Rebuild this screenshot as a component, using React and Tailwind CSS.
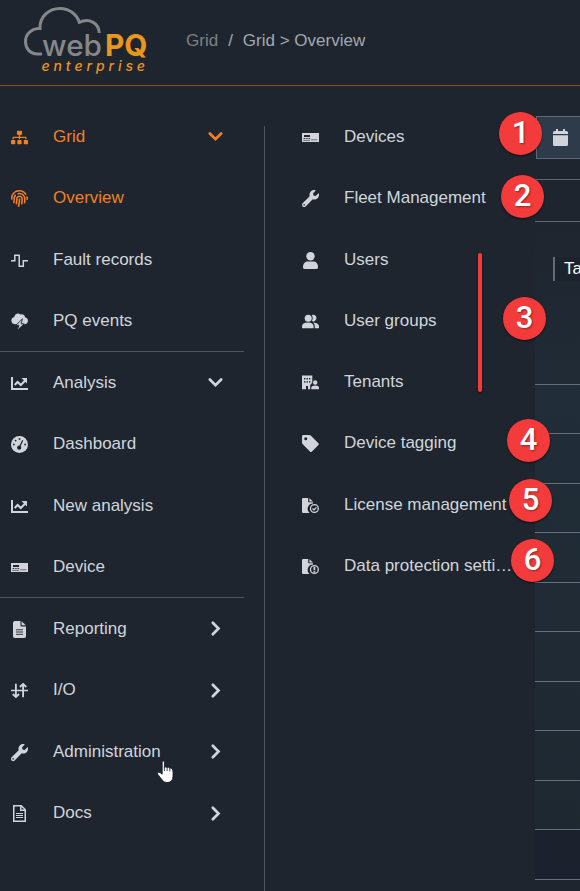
import React from "react";
import { FaSitemap, FaFingerprint, FaWrench } from "react-icons/fa";

const PulseIcon = () => (
  <svg width="17" height="17" viewBox="0 0 17 17" fill="none" stroke="currentColor" strokeWidth="1.5">
    <path d="M0 8.7H3.8V3.2H8.2V14.2H12.3V8.7H17" />
  </svg>
);

const StormIcon = () => (
  <svg width="17" height="17" viewBox="0 0 17 17">
    <path
      fill="currentColor"
      d="M3.300 4A3.700 3.700 0 0 1 9.600 1.600A3 3 0 0 1 14 4.300A3.600 3.600 0 0 1 17 7.800C17 10 15.500 11.300 13.300 11.300H3.800A3.700 3.700 0 0 1 3.300 4Z"
    />
    <path fill="currentColor" stroke="#1e252f" strokeWidth="0.9" d="M11.500 5.800L4.800 12.300H8L6 17.500L13.200 10.800H10Z" />
  </svg>
);

const ChartIcon = () => (
  <svg width="17" height="17" viewBox="0 0 17 17" fill="none" stroke="currentColor">
    <path d="M1 2V14H17" strokeWidth="2" />
    <path d="M3.700 10L6.600 7L9.800 10L14.200 5.500" strokeWidth="2.1" />
    <path d="M10.500 3H16V8.500Z" fill="currentColor" stroke="none" />
  </svg>
);

const GaugeIcon = () => (
  <svg width="17" height="17" viewBox="0 0 17 17">
    <circle cx="8.5" cy="8.5" r="8.5" fill="currentColor" />
    <g fill="#1e252f">
      <circle cx="8.5" cy="3" r="0.9" />
      <circle cx="4.6" cy="4.6" r="0.9" />
      <circle cx="2.9" cy="8.5" r="0.9" />
      <circle cx="14.1" cy="8.5" r="0.9" />
      <circle cx="8.2" cy="11.7" r="2.1" />
    </g>
    <path d="M8.3 11.5L11.7 4.3" stroke="#1e252f" strokeWidth="1.2" />
  </svg>
);

const DeviceIcon = () => (
  <svg width="17" height="17" viewBox="0 0 17 17">
    <rect y="4" width="17" height="9" fill="currentColor" />
    <g fill="#1e252f">
      <rect x="2" y="6" width="6" height="2" />
      <rect x="1.6" y="9" width="1.3" height="1" />
      <rect x="3.7" y="9" width="1" height="1" />
      <rect x="5.4" y="9" width="1" height="1" />
      <rect x="7.1" y="9" width="1" height="1" />
      <rect x="1.3" y="10.9" width="6.7" height="0.6" />
      <rect x="9" y="10.6" width="6.3" height="0.6" />
    </g>
  </svg>
);

const ReportIcon = () => (
  <svg width="17" height="17" viewBox="0 0 17 17" fill="currentColor">
    <path d="M4 0H9.5V4.2Q9.5 5.4 10.7 5.4H15V15.3Q15 17 13.3 17H3.7Q2 17 2 15.3V2Q2 0 4 0ZM10.6 0.2L14.8 4.3H10.6Z" />
    <path d="M5 8.8H12M5 11H12M5 13.3H12" stroke="#1e252f" strokeWidth="0.9" />
  </svg>
);

const DocsIcon = () => (
  <svg width="17" height="17" viewBox="0 0 17 17" fill="none" stroke="currentColor" strokeWidth="1.5">
    <path d="M2.750 0.750H10.300L14.250 4.700V16.250H2.750Z" />
    <path d="M9.8 0.9V5.2H14.2" />
    <path d="M5 8.500H12M5 10.500H12M5 12.500H12" strokeWidth="1" />
  </svg>
);

const IoIcon = () => (
  <svg width="17" height="17" viewBox="0 0 17 17" fill="none" stroke="currentColor" strokeWidth="1.8">
    <path d="M0 8.5H17" strokeWidth="1.5" />
    <path d="M4.900 1.700V15M1.700 12L4.900 15L8.100 12" />
    <path d="M12.100 15.300V2M8.900 5L12.100 2L15.300 5" />
  </svg>
);

const PersonIcon = () => (
  <svg width="17" height="17" viewBox="0 0 17 17" fill="currentColor">
    <circle cx="8.5" cy="4.300" r="4.200" />
    <path d="M1 15.300C1 11.500 3 9.600 6 9.600H11C14 9.600 16 11.500 16 15.300Q16 17 14.500 17H2.500Q1 17 1 15.300Z" />
  </svg>
);

const PeopleIcon = () => (
  <svg width="17" height="17" viewBox="0 0 17 17" fill="currentColor">
    <circle cx="6.2" cy="5.2" r="3.5" />
    <path d="M0 15.300V13.600Q0 9.500 6 9.500Q11.600 9.500 11.600 13.600V15.300Z" />
    <path d="M9.800 2.100A3.300 3.300 0 1 1 9.800 8.100Q11.600 5.200 9.800 2.100Z" />
    <path d="M11.300 9.600Q17 10 17 13.600V15.300H12.800V13.500Q12.800 11 11.300 9.600Z" />
  </svg>
);

const TenantsIcon = () => (
  <svg width="17" height="17" viewBox="0 0 17 17">
    <path fill="currentColor" d="M0 1.5H10.3V8.6L8.2 11V15.2H6V12H4V15.2H0Z" />
    <g fill="#1e252f">
      <rect x="2" y="4" width="1.4" height="1.4" />
      <rect x="4.5" y="4" width="1.4" height="1.4" />
      <rect x="7" y="4" width="1.4" height="1.4" />
      <rect x="2" y="7.2" width="1.4" height="1.4" />
      <rect x="4.5" y="7.2" width="1.4" height="1.4" />
      <rect x="7" y="7.2" width="1.4" height="1.4" />
    </g>
    <circle cx="13.2" cy="8.5" r="2.2" fill="currentColor" />
    <path fill="currentColor" d="M9.3 15.2V13.8Q9.5 11.4 13.3 11.4Q17 11.4 17 13.8V15.2Z" />
  </svg>
);

const TagIcon = () => (
  <svg width="17" height="17" viewBox="0 0 17 17" fill="currentColor" fillRule="evenodd">
    <path d="M1.4 0H7.2Q8.2 0 9 0.8L16.4 8.2Q17.3 9.1 16.4 10L10 16.4Q8.9 17.4 7.9 16.4L0.8 9.3Q0 8.5 0 7.4V1.4Q0 0 1.4 0ZM3.7 2.2A1.5 1.5 0 1 0 3.7 5.2A1.5 1.5 0 1 0 3.7 2.2Z" />
  </svg>
);

const FileBadgeIcon = ({ mark }) => (
  <svg width="17" height="17" viewBox="0 0 17 17">
    <path fill="currentColor" d="M1.2 1H6.2V5.2H11V6.600A5.300 5.300 0 0 0 7.600 16H1.2Q0 16 0 14.8V2.2Q0 1 1.2 1ZM7.4 1.2L11 4.6H7.4Z" />
    <circle cx="12.4" cy="11.5" r="3.9" fill="none" stroke="currentColor" strokeWidth="1.3" />
    {mark === "check" ? (
      <path d="M10.5 11.5L12 12.9L14.4 10.4" fill="none" stroke="currentColor" strokeWidth="1.3" />
    ) : (
      <path d="M12.4 8.8V12.2M12.4 13.1V14.5" stroke="currentColor" strokeWidth="1.7" />
    )}
  </svg>
);

const CalendarIcon = () => (
  <svg width="15" height="17" viewBox="0 0 15 17" fill="currentColor">
    <path d="M3 0H5V2H10V0H12V2H13.5Q15 2 15 3.5V5H0V3.5Q0 2 1.5 2H3ZM0 6.3H15V15.5Q15 17 13.5 17H1.5Q0 17 0 15.5Z" />
  </svg>
);

const Chevron = ({ open }) => (
  <svg width="17" height="17" viewBox="0 0 17 17" fill="none" stroke="currentColor" strokeWidth="2.7" strokeLinecap="round">
    <path d={open ? "M2.8 5.5L8.5 11.1L14.2 5.5" : "M5.8 2.8L11.5 8.5L5.8 14.2"} />
  </svg>
);

const menuGroups = [
  [
    { label: "Grid", icon: <FaSitemap size={17} />, active: true, arrow: "down" },
    { label: "Overview", icon: <FaFingerprint size={17} />, active: true },
    { label: "Fault records", icon: <PulseIcon /> },
    { label: "PQ events", icon: <StormIcon /> },
  ],
  [
    { label: "Analysis", icon: <ChartIcon />, arrow: "down" },
    { label: "Dashboard", icon: <GaugeIcon /> },
    { label: "New analysis", icon: <ChartIcon /> },
    { label: "Device", icon: <DeviceIcon /> },
  ],
  [
    { label: "Reporting", icon: <ReportIcon />, arrow: "right" },
    { label: "I/O", icon: <IoIcon />, arrow: "right" },
    { label: "Administration", icon: <FaWrench size={17} />, arrow: "right" },
    { label: "Docs", icon: <DocsIcon />, arrow: "right" },
  ],
];

const adminItems = [
  { label: "Devices", icon: <DeviceIcon /> },
  { label: "Fleet Management", icon: <FaWrench size={17} /> },
  { label: "Users", icon: <PersonIcon /> },
  { label: "User groups", icon: <PeopleIcon /> },
  { label: "Tenants", icon: <TenantsIcon /> },
  { label: "Device tagging", icon: <TagIcon /> },
  { label: "License management", icon: <FileBadgeIcon mark="check" /> },
  { label: "Data protection setti…", icon: <FileBadgeIcon mark="alert" /> },
];

const markers = [
  { n: 1, place: "left-[499px] top-[112px]" },
  { n: 2, place: "left-[501px] top-[175px]" },
  { n: 3, place: "left-[503px] top-[297px]" },
  { n: 4, place: "left-[507px] top-[419px]" },
  { n: 5, place: "left-[509px] top-[479px]" },
  { n: 6, place: "left-[511px] top-[539px]" },
];

const Logo = () => (
  <svg width="130" height="76" viewBox="20 4 130 76" className="ml-5 mt-1 shrink-0">
    <path
      d="M42 54H37.5C30 54 25.5 48.5 25.5 41.5C25.5 34.5 31 29 38.5 28.5H40C39.5 17 48.5 8.5 60 8.5C69.500 8.500 77 14.500 79.300 22.300C89 18 98.700 22.500 99.300 33"
      fill="none"
      stroke="#858789"
      strokeWidth="3"
    />
    <text x="42" y="55.500" fontFamily="Inter, sans-serif" fontSize="29.500" fontWeight="450" fill="#858789" textLength="60" lengthAdjust="spacingAndGlyphs">web</text>
    <text x="105" y="55.500" fontFamily="Inter, sans-serif" fontSize="30.500" fontWeight="700" fill="#ea951c" textLength="42.500" lengthAdjust="spacingAndGlyphs">PQ</text>
    <text x="41.500" y="71" fontFamily="Inter, sans-serif" fontSize="14" fontStyle="italic" fontWeight="500" fill="#ea951c" letterSpacing="3.900">enterprise</text>
  </svg>
);

const MenuItem = ({ item }) => (
  <li className={`${item.active ? "text-[#f28022]" : "text-[#d1d5db]"} flex flex-1 items-center`}>
    <span className="flex w-[17px] shrink-0 justify-center pt-px">{item.icon}</span>
    <span className="ml-[25px] flex-1 whitespace-nowrap">{item.label}</span>
    {item.arrow && (
      <span className="mr-5">
        <Chevron open={item.arrow === "down"} />
      </span>
    )}
  </li>
);

const App = () => {
  return (
    <div className="relative flex h-[891px] w-[580px] flex-col overflow-hidden bg-[#1e252f] font-['Liberation_Sans',Arial,sans-serif] text-[17px] leading-6">
      <header className="flex h-[86px] shrink-0 border-b border-[#8d4c1b]">
        <Logo />
        <nav className="ml-9 flex pt-[29px] text-[#a3a8af]">
          <span className="text-[#7f8081]">Grid</span>
          <span className="mx-[10px]">/</span>
          <span>Grid &gt; Overview</span>
        </nav>
      </header>

      <div className="flex flex-1">
        <aside className="w-[264px] shrink-0 pr-5 pt-[19px]">
          {menuGroups.map((group, i) => (
            <ul
              key={i}
              className={`${i < 2 ? "border-[#505458]" : "border-transparent"} -mb-px flex h-[247px] flex-col border-b pl-[11px] [&_li]:pt-0.5`}
            >
              {group.map((item) => (
                <MenuItem key={item.label} item={item} />
              ))}
            </ul>
          ))}
        </aside>

        <section className="mt-10 w-[271px] shrink-0 border-l border-[#505660]">
          <ul className="-mt-[19.5px] flex h-[490px] flex-col pl-[37px]">
            {adminItems.map((item) => (
              <MenuItem key={item.label} item={item} />
            ))}
          </ul>
        </section>

        <main className="flex flex-1 flex-col overflow-hidden pt-[30px]">
          <div className="ml-px h-[43px] w-14 shrink-0 border border-[#59697a] bg-[#2e3b4a] pl-4 pt-3 text-[#d1d5db]">
            <CalendarIcon />
          </div>
          <div className="mt-5 h-[43px] shrink-0 border-y border-[#5d6773]" />
          <div className="h-[163px] shrink-0 border-b border-[#64707b] bg-linear-to-b from-[#1e252f] to-[#202b36] pl-[18px] pt-[35px]">
            <div className="w-12 border-l-2 border-[#626b77] bg-[#1c232c] pl-[9px] text-white">Table</div>
          </div>
          <div className="flex h-[445px] shrink-0 flex-col bg-linear-to-b from-[#212d38] to-[#1e2831]">
            {[...Array(9)].map((_, i) => (
              <div key={i} className="flex-1 border-b border-[#64707b]" />
            ))}
          </div>
          <div className="h-[50px] shrink-0 border-b border-[#64707b] bg-[#1c222d]" />
        </main>
      </div>

      <div className="absolute left-[478px] top-[253px] h-[139px] w-1 rounded-full bg-[#f23a3a] shadow-[0_1px_2px_rgba(0,0,0,0.5)]" />
      {markers.map(({ n, place }) => (
        <div
          key={n}
          className={`${place} absolute flex h-[43px] w-[43px] items-center justify-center rounded-full bg-[#f43b3b] pb-px font-[Roboto,sans-serif] text-[31px] font-medium text-white shadow-[0_1px_2px_rgba(0,0,0,0.6)] [text-shadow:1px_1px_2px_rgba(0,0,0,0.4)]`}
        >
          {n}
        </div>
      ))}

      {/* hand cursor over Administration */}
      <svg className="absolute left-[156px] top-[760px]" width="19" height="24" viewBox="0 0 19 24">
        <path
          d="M6.200 2.300Q6.200 1 7.300 1Q8.400 1 8.400 2.300V7.300Q9.800 6.400 11 7.500Q12.800 6.800 13.700 8.200Q15 7.700 16.300 9Q17 10 17 12.500V16Q17 22.500 11 22.500Q8 22.500 6.200 20L1.500 14Q1 12.500 2.500 12.200Q4.300 12.300 6.200 14.200Z"
          fill="#fff"
          stroke="#11151b"
          strokeWidth="0.8"
        />
        <path d="M8.400 7V11M11.100 7.800V11M13.800 8.500V11.500" stroke="#11151b" strokeWidth="0.8" />
      </svg>
    </div>
  );
};

export default App;
